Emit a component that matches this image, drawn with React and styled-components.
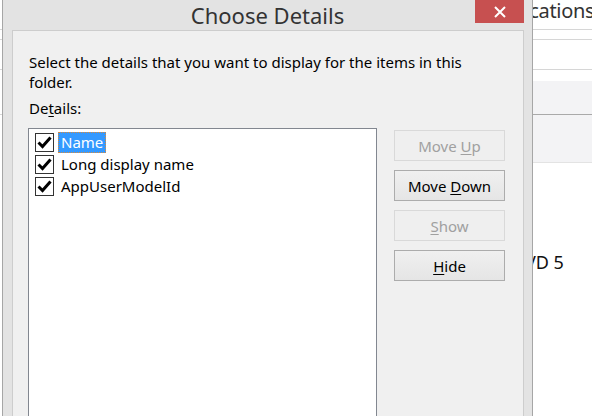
import React from "react";
import styled, { createGlobalStyle } from "styled-components";

const GlobalStyle = createGlobalStyle`
  html, body {
    margin: 0;
    padding: 0;
    width: 592px;
    height: 416px;
    overflow: hidden;
    background: #ffffff;
    font-family: "Segoe UI", "Noto Sans", "Open Sans", sans-serif;
  }
  * { box-sizing: border-box; }
`;

const Screen = styled.div`
  display: flex;
  width: 592px;
  height: 416px;
  overflow: hidden;
`;

const BehindStrip = styled.div`
  width: ${(p) => p.width}px;
  flex: ${(p) => (p.width ? "none" : "1")};
  display: flex;
  flex-direction: column;
  overflow: hidden;
  background: #fff;
`;

const BehindHeading = styled.div`
  height: 30px;
  font-size: 20px;
  line-height: 22px;
  color: #333;
  white-space: nowrap;
  margin-left: -50px;
  letter-spacing: -0.3px;
  border-bottom: 1px solid #d6d6d6;
`;

const BehindRow = styled.div`
  height: ${(p) => p.h}px;
  background: ${(p) => p.bg || "#fff"};
  border-bottom: 1px solid ${(p) => p.line || "#d6d6d6"};
  flex: none;
`;

const BehindText = styled.div`
  margin-top: 87px;
  margin-left: -21px;
  font-size: 18px;
  color: #111;
  white-space: nowrap;
`;

const Window = styled.div`
  width: 531px;
  flex: none;
  background: #e3e3e3;
  border-left: 1px solid #a6a6a6;
  border-right: 1px solid #a6a6a6;
  display: flex;
  flex-direction: column;
`;

const TitleBar = styled.div`
  height: 35px;
  display: flex;
  justify-content: center;
  position: relative;
`;

const Title = styled.div`
  font-size: 22px;
  line-height: 30px;
  color: #333;
`;

const CloseButton = styled.div`
  position: absolute;
  top: 0;
  right: 8px;
  width: 49px;
  height: 23px;
  background: #c75050;
  display: flex;
  align-items: center;
  justify-content: center;
`;

const Client = styled.div`
  margin: 0 8px 0 9px;
  flex: 1;
  background: #f0f0f0;
  border: 1px solid #cdcdcd;
  border-bottom: none;
  padding: 21px 0 0 16px;
  font-size: 15px;
  color: #000;
`;

const Intro = styled.p`
  margin: 0;
  line-height: 20px;
  width: 460px;
`;

const Label = styled.div`
  margin-top: 6px;
  line-height: 20px;
`;

const Access = styled.span`
  text-decoration: underline;
  text-underline-offset: 2px;
`;

const ContentRow = styled.div`
  display: flex;
  gap: 17px;
  margin-top: 10px;
  margin-left: -1px;
`;

const ListBox = styled.div`
  width: 349px;
  height: 300px;
  background: #fff;
  border: 1px solid #828790;
  padding: 2px 0 0 6px;
  display: flex;
  flex-direction: column;
`;

const Row = styled.div`
  display: flex;
  align-items: center;
  height: 22px;
`;

const Box = styled.div`
  width: 19px;
  height: 19px;
  border: 1px solid #333;
  background: #fff;
  display: flex;
  align-items: center;
  justify-content: center;
  margin-right: 4px;
`;

const ItemText = styled.span`
  font-size: 15px;
  line-height: 19px;
  padding: 0 2px 0 2px;
  border: 1px ${(p) => (p.selected ? "dotted #d98a3a" : "solid transparent")};
  background: ${(p) => (p.selected ? "#3399ff" : "transparent")};
  color: ${(p) => (p.selected ? "#fff" : "#000")};
`;

const Buttons = styled.div`
  display: flex;
  flex-direction: column;
  gap: 9px;
  margin-top: 2px;
`;

const Button = styled.div`
  width: 111px;
  height: 31px;
  display: flex;
  align-items: center;
  justify-content: center;
  font-size: 15px;
  border: 1px solid ${(p) => (p.disabled ? "#d9d9d9" : "#acacac")};
  background: ${(p) =>
    p.disabled ? "#efefef" : "linear-gradient(#f0f0f0, #e5e5e5)"};
  color: ${(p) => (p.disabled ? "#a0a0a0" : "#000")};
`;

const Check = () => (
  <svg width="15" height="15" viewBox="0 0 15 15">
    <path d="M1.5 7.5 L5.5 11.5 L13.5 2.5" fill="none" stroke="#000" strokeWidth="3" />
  </svg>
);

const items = [
  { label: "Name", selected: true },
  { label: "Long display name" },
  { label: "AppUserModelId" },
];

const App = () => (
  <>
    <GlobalStyle />
    <Screen>
      <BehindStrip width={2}>
        <BehindRow h={30} />
        <BehindRow h={10} />
        <BehindRow h={30} />
        <BehindRow h={45} />
      </BehindStrip>
      <Window>
        <TitleBar>
          <Title>Choose Details</Title>
          <CloseButton>
            <svg width="14" height="14" viewBox="0 0 14 14">
              <path d="M2 2 L12 12 M12 2 L2 12" stroke="#fff" strokeWidth="2" />
            </svg>
          </CloseButton>
        </TitleBar>
        <Client>
          <Intro>Select the details that you want to display for the items in this folder.</Intro>
          <Label>
            De<Access>t</Access>ails:
          </Label>
          <ContentRow>
            <ListBox>
              {items.map((it) => (
                <Row key={it.label}>
                  <Box>
                    <Check />
                  </Box>
                  <ItemText selected={it.selected}>{it.label}</ItemText>
                </Row>
              ))}
            </ListBox>
            <Buttons>
              <Button disabled>
                Move&nbsp;<Access>U</Access>p
              </Button>
              <Button>
                Move&nbsp;<Access>D</Access>own
              </Button>
              <Button disabled>
                <Access>S</Access>how
              </Button>
              <Button>
                <Access>H</Access>ide
              </Button>
            </Buttons>
          </ContentRow>
        </Client>
      </Window>
      <BehindStrip>
        <BehindHeading>Applications</BehindHeading>
        <BehindRow h={10} />
        <BehindRow h={30} />
        <BehindRow h={12} line="#f3f3f5" />
        <BehindRow h={33} bg="#f3f3f5" line="#a9a9a9" />
        <BehindRow h={48} bg="#f3f3f5" line="#e3e3e3" />
        <BehindText>DVD 5</BehindText>
      </BehindStrip>
    </Screen>
  </>
);

export default App;
